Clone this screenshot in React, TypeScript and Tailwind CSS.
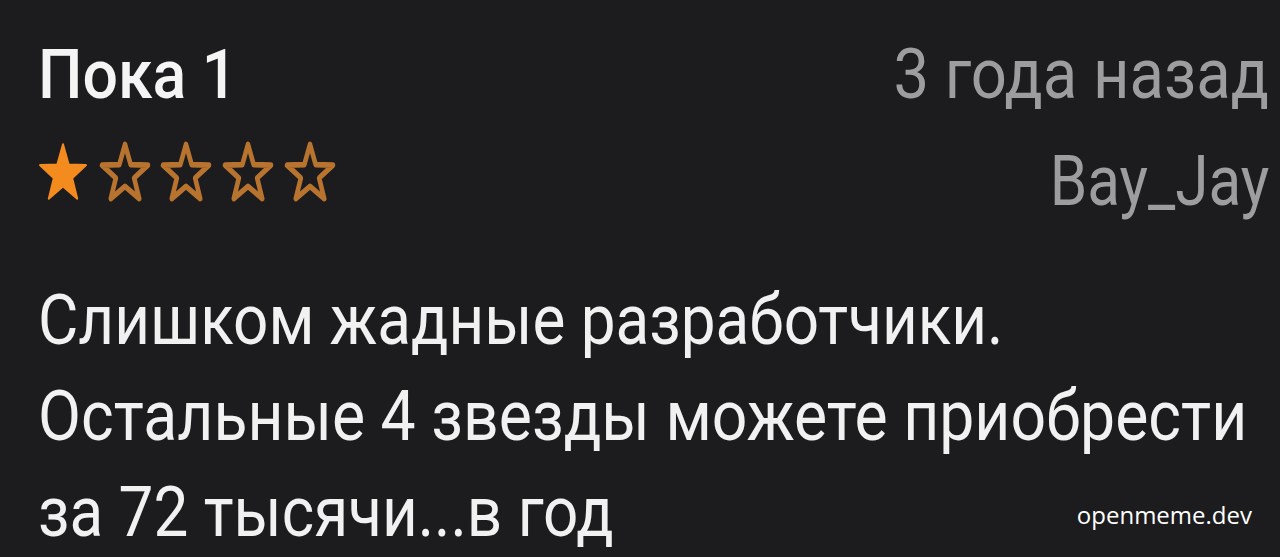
import React from "react";

const STAR =
  "12,1.6 14.59,9.04 22.46,9.2 16.18,13.96 18.47,21.5 12,17 5.53,21.5 7.82,13.96 1.54,9.2 9.41,9.04";

function Star({ filled }: { filled: boolean }) {
  return (
    <svg width="50" height="59" viewBox="0.6 0.7 22.8 21.7" preserveAspectRatio="none" className="overflow-visible">
      <polygon
        points={STAR}
        fill={filled ? "#f38b1e" : "none"}
        stroke={filled ? "#f38b1e" : "#b8732f"}
        strokeWidth={filled ? 0.9 : 2.1}
        strokeLinejoin="round"
      />
    </svg>
  );
}

export default function App() {
  return (
    <div
      className="w-[1280px] h-[557px] bg-[#1c1c1e] relative overflow-hidden"
      style={{ fontFamily: "Roboto, 'Liberation Sans', sans-serif" }}
    >
      <div className="flex flex-col pl-[38px] pr-[11px] pt-[34px]">
        <div className="flex justify-between items-start">
          <div className="flex flex-col">
            <div className="text-[68px] leading-[80px] font-medium text-[#f4f4f4] whitespace-nowrap scale-x-[0.92] origin-left mt-[1px]">
              Пока 1
            </div>
            <div className="flex gap-[11.7px] mt-[27px]">
              <Star filled />
              <Star filled={false} />
              <Star filled={false} />
              <Star filled={false} />
              <Star filled={false} />
            </div>
          </div>
          <div className="flex flex-col items-end text-[#9d9d9f] text-[70px] leading-[80px] whitespace-nowrap">
            <div className="scale-x-[0.905] origin-right">3 года назад</div>
            <div className="mt-[27px] scale-x-[0.86] origin-right">Bay_Jay</div>
          </div>
        </div>
        <div className="mt-[51px] text-[70px] leading-[96px] text-[#f1f1f1] whitespace-nowrap">
          <div className="scale-x-[0.886] origin-left">Слишком жадные разработчики.</div>
          <div className="scale-x-[0.893] origin-left">Остальные 4 звезды можете приобрести</div>
          <div className="scale-x-[0.886] origin-left">за 72 тысячи...в год</div>
        </div>
      </div>
      <div
        className="absolute right-[28px] bottom-[24px] text-[24px] text-white"
        style={{ fontFamily: "'Open Sans', sans-serif" }}
      >
        openmeme.dev
      </div>
    </div>
  );
}
